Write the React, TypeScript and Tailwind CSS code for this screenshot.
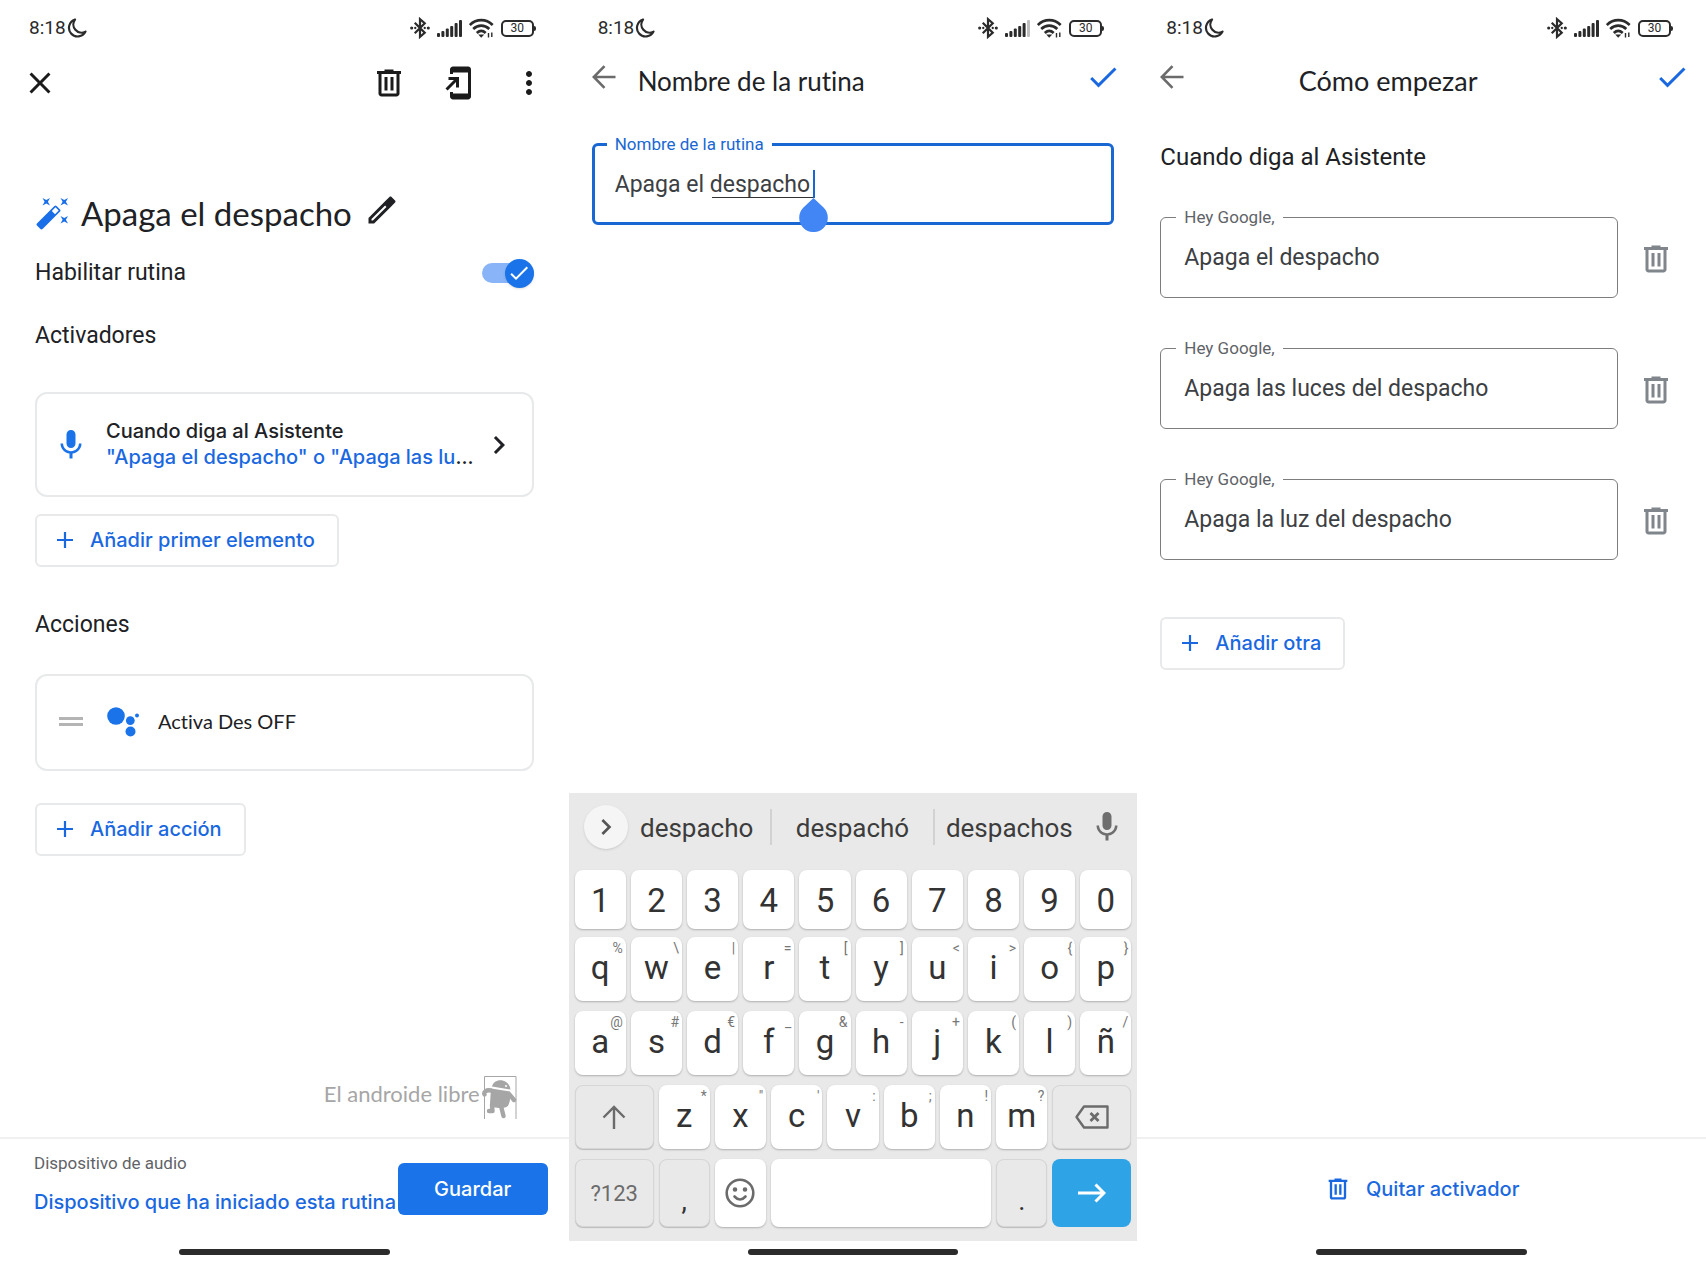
import React, { useState } from "react";

const HEAD = "font-['Lato',sans-serif] [font-variant-ligatures:none]";
const LABEL = "font-['Inter',sans-serif] font-medium text-[20px]";

const P = {
  trash: "M15 4V3H9v1H4v2h1v13c0 1.1.9 2 2 2h10c1.1 0 2-.9 2-2V6h1V4h-5zm2 15H7V6h10v13zM9 8h2v9H9zM13 8h2v9h-2z",
  home: "M18 1.01L8 1c-1.1 0-2 .9-2 2v3h2V5h10v14H8v-1H6v3c0 1.1.9 2 2 2h10c1.1 0 2-.9 2-2V3c0-1.1-.9-1.99-2-1.99zM10 15h2V8H5v2h3.59L3 15.59 4.41 17 10 11.41V15z",
  close: "M19 6.41L17.59 5 12 10.59 6.41 5 5 6.41 10.59 12 5 17.59 6.41 19 12 13.41 17.59 19 19 17.59 13.41 12z",
  dots: "M12 8c1.1 0 2-.9 2-2s-.9-2-2-2-2 .9-2 2 .9 2 2 2zm0 2c-1.1 0-2 .9-2 2s.9 2 2 2 2-.9 2-2-.9-2-2-2zm0 6c-1.1 0-2 .9-2 2s.9 2 2 2 2-.9 2-2-.9-2-2-2z",
  wand: "M7.5 5.6L10 7 8.6 4.5 10 2 7.5 3.4 5 2l1.4 2.5L5 7zm12 9.8L17 14l1.4 2.5L17 19l2.5-1.4L22 19l-1.4-2.5L22 14zM22 2l-2.5 1.4L17 2l1.4 2.5L17 7l2.5-1.4L22 7l-1.4-2.5zm-7.63 5.29a.996.996 0 00-1.41 0L1.29 18.96a.996.996 0 000 1.41l2.34 2.34c.39.39 1.02.39 1.41 0L16.7 11.05c.39-.39.39-1.02 0-1.41l-2.33-2.35zm-1.03 5.49l-2.12-2.12 2.44-2.44 2.12 2.12-2.44 2.44z",
  pencil: "M14.06 9.02l.92.92L5.92 19H5v-.92l9.06-9.06M17.66 3c-.25 0-.51.1-.7.29l-2.9 2.9L3 17.25V21h3.75L17.81 9.94l2.9-2.9c.39-.39.39-1.02 0-1.41l-2.34-2.34c-.2-.2-.45-.29-.71-.29z",
  mic: "M12 14c1.66 0 2.99-1.34 2.99-3L15 5c0-1.66-1.34-3-3-3S9 3.34 9 5v6c0 1.66 1.34 3 3 3zm5.3-3c0 3-2.54 5.1-5.3 5.1S6.7 14 6.7 11H5c0 3.41 2.72 6.23 6 6.72V21h2v-3.28c3.28-.48 6-3.3 6-6.72h-1.7z",
  chevron: "M10 6L8.59 7.41 13.17 12l-4.58 4.59L10 18l6-6z",
  check: "M9 16.17L4.83 12l-1.42 1.41L9 19 21 7l-1.41-1.41z",
};

function Icon({ d, className = "size-9" }: { d: string; className?: string }) {
  return (
    <svg viewBox="0 0 24 24" fill="currentColor" aria-hidden="true" className={`shrink-0 ${className}`}>
      <path d={d} fillRule="evenodd" />
    </svg>
  );
}

function BackArrow() {
  return (
    <svg viewBox="0 0 24 24" fill="none" stroke="currentColor" strokeWidth="2.6" aria-hidden="true" className="size-6">
      <path d="M23.5 12H2M12.5 1.2 1.8 12l10.700 10.800" />
    </svg>
  );
}

function StatusBar({ weak = false }: { weak?: boolean }) {
  return (
    <div className="flex h-14 shrink-0 items-center pl-[29px] pr-[33px] text-[#2b2b2b]">
      <span className="text-[19px] leading-6">8:18</span>
      <svg viewBox="0 0 20 20" className="ml-px size-5" fill="none" stroke="currentColor" strokeWidth="2.2" strokeLinejoin="round" aria-hidden="true">
        <path d="M8 1.500A8.700 8.700 0 1 0 18.500 13.600 A8.200 8.200 0 0 1 8 1.500z" />
      </svg>
      <div className="ml-auto flex items-center gap-[7px]">
        <svg viewBox="0 0 19 20" className="h-[22px] w-[20px]" fill="none" stroke="currentColor" strokeWidth="2.1" aria-hidden="true">
          <path d="M4.500 5 14 14.500 9.500 18.400V1.600L14 5.500 4.500 15" />
          <circle cx="1.6" cy="10" r="1.5" fill="currentColor" stroke="none" />
          <circle cx="5" cy="10" r="1.1" fill="currentColor" stroke="none" />
          <circle cx="14" cy="10" r="1.1" fill="currentColor" stroke="none" />
          <circle cx="17.4" cy="10" r="1.5" fill="currentColor" stroke="none" />
        </svg>
        <svg viewBox="0 0 25 17" className="h-[17px] w-[25px]" fill="currentColor" aria-hidden="true">
          <rect x="0" y="13" width="3" height="4" rx="1" />
          <rect x="4.4" y="11" width="3" height="6" rx="1" />
          <rect x="8.8" y="8.5" width="3" height="8.5" rx="1" />
          <rect x="13.2" y="6" width="3" height="11" rx="1" />
          <rect x="17.6" y="3" width="3" height="14" rx="1" />
          <rect x="22" y="0" width="3" height="17" rx="1" opacity={weak ? 0.3 : 1} />
        </svg>
        <svg viewBox="0 0 25 20" className="h-5 w-[25px]" fill="none" stroke="currentColor" strokeWidth="2.7" aria-hidden="true">
          <path d="M.8 7C7.500.6 17 .6 23.700 7M4.200 11c4.800-4.400 11.300-4.400 16.100 0M7.800 15c2.800-2.600 6.100-2.600 8.900 0" />
          <path d="M9.200 16.500h6L12.200 19.800z" fill="currentColor" stroke="none" />
          <path d="M19.500 19.500V15M22.800 14.500V19" strokeWidth="1.4" />
        </svg>
        <div className="flex items-center">
          <span className="flex h-[17px] w-[33px] items-center justify-center rounded-[5px] border-2 border-current text-[12px] leading-none">30</span>
          <span className="h-[5px] w-[2px] rounded-r bg-current" />
        </div>
      </div>
    </div>
  );
}

function HomeBar() {
  return <div className="mx-auto h-[6px] w-[37%] shrink-0 rounded-full bg-[#2b2b2b]" />;
}

function AddButton({ children, className = "" }: { children: string; className?: string }) {
  return (
    <button
      type="button"
      className={`flex h-[53px] items-center gap-[17px] self-start rounded-md border-2 border-[#e8e9ea] bg-white pl-5 pr-[22px] pb-[2px] text-[#1a68e0] ${LABEL} ${className}`}
    >
      <svg viewBox="0 0 16 16" className="size-4" stroke="currentColor" strokeWidth="2.2" aria-hidden="true">
        <path d="M8 0v16M0 8h16" />
      </svg>
      {children}
    </button>
  );
}

function RoutinePanel() {
  const [enabled, setEnabled] = useState(true);
  return (
    <section className="flex min-w-0 flex-col">
      <StatusBar />
      <header className="flex h-[53px] items-center px-[22px] text-[#1b1b1b]">
        <button type="button" aria-label="Cerrar"><Icon d={P.close} /></button>
        <div className="ml-auto flex items-center gap-[34px]">
          <button type="button" aria-label="Eliminar"><Icon d={P.trash} /></button>
          <button type="button" aria-label="Añadir a la pantalla de inicio"><Icon d={P.home} /></button>
          <button type="button" aria-label="Más opciones"><Icon d={P.dots} /></button>
        </div>
      </header>

      <div className="flex flex-col px-[35px] text-[#202124]">
        <div className="mt-[84px] flex h-10 items-center">
          <span className="text-[#1a6fe8]"><Icon d={P.wand} /></span>
          <h1 className={`ml-[10px] text-[33px] leading-10 ${HEAD}`}>Apaga el despacho</h1>
          <button type="button" aria-label="Editar nombre" className="mb-[6px] ml-3"><Icon d={P.pencil} /></button>
        </div>

        <label className="mt-6 flex h-8 items-center justify-between">
          <span className="text-[23px] leading-8">Habilitar rutina</span>
          <input type="checkbox" role="switch" checked={enabled} onChange={(e) => setEnabled(e.target.checked)} className="peer sr-only" />
          <span className="flex h-5 w-[52px] items-center justify-start rounded-full bg-gray-300 peer-checked:justify-end peer-checked:bg-[#8ab4f8]">
            <span className="flex size-[29px] shrink-0 items-center justify-center rounded-full bg-[#1a73e8] text-white shadow">
              <Icon d={P.check} className="size-6" />
            </span>
          </span>
        </label>

        <h2 className="mt-[31px] text-[23px] leading-8">Activadores</h2>
        <button type="button" className={`mt-[40px] flex h-[105px] items-center rounded-xl border-2 border-[#e8e9ea] pl-[16px] pr-[15px] text-left leading-[26px] ${LABEL}`}>
          <span className="text-[#1a73e8]"><Icon d={P.mic} /></span>
          <span className="ml-[17px] min-w-0 flex-1 pb-[2px]">
            <span className="block">Cuando diga al Asistente</span>
            <span className="block whitespace-nowrap text-[#1a68e0]">"Apaga el despacho" o "Apaga las lu<span className="text-[#202124]">...</span></span>
          </span>
          <Icon d={P.chevron} />
        </button>
        <AddButton className="mt-[17px]">Añadir primer elemento</AddButton>

        <h2 className="mt-[42px] text-[23px] leading-8">Acciones</h2>
        <div className="mt-[33px] flex h-[97px] items-center rounded-xl border-2 border-[#e8e9ea] pl-[22px] pb-[2px]">
          <span className="h-[9px] w-6 border-y-[3px] border-[#b4b4b4]" />
          <svg viewBox="0 0 32 32" className="ml-6 size-8" fill="#1a73e8" aria-hidden="true">
            <circle cx="9" cy="10" r="8.8" />
            <circle cx="23.3" cy="14.6" r="4.4" />
            <circle cx="23.5" cy="25.5" r="5" />
            <circle cx="30" cy="9.5" r="2" />
          </svg>
          <span className={`ml-[19px] pb-[2px] text-[20px] ${HEAD}`}>Activa Des OFF</span>
        </div>
        <AddButton className="mt-[32px]">Añadir acción</AddButton>
      </div>

      <div className="mt-auto mb-[18px] mr-[52px] flex items-center justify-end gap-px text-[#a6a6a6]">
        <span className={`pb-[6px] text-[22px] leading-8 ${HEAD}`}>El androide libre</span>
        <svg viewBox="0 0 36 44" className="h-11 w-9" fill="currentColor" aria-hidden="true">
          <path d="M3.500 44V1.500H35V44" fill="none" stroke="currentColor" strokeWidth="1" />
          <path d="M11 11.500C13 2.500 28 3 29.500 14.500z" />
          <path d="M10 13.500 29 16.500Q30 24 27.500 30 26 33.500 18 33 9 32.500 9 28z" />
          <path d="M10 15.500C5 14.500 2.500 17 3.500 19.500M28 19l5 6M11 30l.5 6H8M20 31l2.500 10" fill="none" stroke="currentColor" strokeWidth="4.400" strokeLinecap="round" strokeLinejoin="round" />
          <circle cx="25" cy="11" r="1" fill="#fff" />
        </svg>
      </div>

      <footer className="flex h-[126px] flex-col border-t-2 border-[#f0f0f0] pb-2">
        <div className="flex flex-1 items-start pl-[34px] pr-[21px]">
          <div className="min-w-0 flex-1 whitespace-nowrap pt-[12px]">
            <div className="text-[17px] leading-6 text-[#5f6368]">Dispositivo de audio</div>
            <a href="#dispositivo" className={`mt-[15px] block leading-6 text-[#1a68e0] ${LABEL}`}>Dispositivo que ha iniciado esta rutina</a>
          </div>
          <button type="button" className={`mt-6 h-[52px] w-[150px] shrink-0 rounded-md bg-[#1a73e8] text-white ${LABEL}`}>Guardar</button>
        </div>
        <HomeBar />
      </footer>
    </section>
  );
}

const DIGITS: [string, string][] = [..."1234567890"].map((c) => [c, ""]);
const ROW2: [string, string][] = [["q", "%"], ["w", "\\"], ["e", "|"], ["r", "="], ["t", "["], ["y", "]"], ["u", "<"], ["i", ">"], ["o", "{"], ["p", "}"]];
const ROW3: [string, string][] = [["a", "@"], ["s", "#"], ["d", "€"], ["f", "_"], ["g", "&"], ["h", "-"], ["j", "+"], ["k", "("], ["l", ")"], ["ñ", "/"]];
const ROW4: [string, string][] = [["z", "*"], ["x", "\""], ["c", "'"], ["v", ":"], ["b", ";"], ["n", "!"], ["m", "?"]];

const KEY = "relative flex items-center justify-center rounded-lg";
const WHITE = "bg-white shadow-[0_1px_2px_rgba(0,0,0,0.25)]";
const GREY = "bg-[#e9e9e9] border border-[#d6d6d6] shadow-[0_1px_1px_rgba(0,0,0,0.2)]";

function Key({ k }: { k: [string, string] }) {
  return (
    <button type="button" className={`${KEY} ${WHITE} min-w-0 flex-1 text-[33px] leading-none text-[#333] ${k[1] ? "pb-1" : "pt-[2px]"}`}>
      {k[0]}
      {k[1] && <span className="absolute right-[3px] top-[3px] text-[14px] leading-4 text-[#777]">{k[1]}</span>}
    </button>
  );
}

function Keyboard() {
  return (
    <div className="bg-[#e9e9e9] px-[6px] pb-[14px]">
      <div className="flex h-[77px] items-center pb-[10px] text-[26px] text-[#3c3c3c]">
        <button type="button" aria-label="Expandir" className="ml-[9px] flex size-11 shrink-0 items-center justify-center rounded-full bg-[#f5f5f5] text-[#555] shadow">
          <Icon d={P.chevron} className="size-8" />
        </button>
        <button type="button" className="w-[142px] pt-1 pr-1">despacho</button>
        <span className="h-9 w-[2px] bg-[#d2d2d2]" />
        <button type="button" className="flex-1 pt-1">despachó</button>
        <span className="h-9 w-[2px] bg-[#d2d2d2]" />
        <button type="button" className="w-[148px] pt-1">despachos</button>
        <button type="button" aria-label="Voz" className="flex w-12 justify-center text-[#6e6e6e]">
          <Icon d={P.mic} />
        </button>
      </div>
      <div className="flex h-[59px] gap-[5px]">{DIGITS.map((k) => <Key key={k[0]} k={k} />)}</div>
      <div className="mt-2 flex h-16 gap-[5px]">{ROW2.map((k) => <Key key={k[0]} k={k} />)}</div>
      <div className="mt-[10px] flex h-16 gap-[5px]">{ROW3.map((k) => <Key key={k[0]} k={k} />)}</div>
      <div className="mt-[10px] flex h-16 gap-[5px]">
        <button type="button" aria-label="Mayúsculas" className={`${KEY} ${GREY} w-[79px] shrink-0 text-[#6b6b6b]`}>
          <svg viewBox="0 0 24 24" className="size-6" fill="none" stroke="currentColor" strokeWidth="2.4" aria-hidden="true"><path d="M12 24V2M1.500 12.500 12 2l10.500 10.500" /></svg>
        </button>
        {ROW4.map((k) => <Key key={k[0]} k={k} />)}
        <button type="button" aria-label="Borrar" className={`${KEY} ${GREY} w-[79px] shrink-0 text-[#6b6b6b]`}>
          <svg viewBox="0 0 34 24" className="h-6 w-[34px]" fill="none" stroke="currentColor" strokeWidth="2.400" strokeLinejoin="round" aria-hidden="true">
            <path d="M9 1.500H32.500V22.500H9L1.500 12z" /><path d="m15.500 8 8 8m0-8-8 8" strokeWidth="2.800" />
          </svg>
        </button>
      </div>
      <div className="mt-[10px] flex h-[68px] gap-[5px]">
        <button type="button" className={`${KEY} ${GREY} w-[79px] shrink-0 text-[22px] text-[#6b6b6b]`}>?123</button>
        <button type="button" className={`${KEY} ${GREY} w-[51px] shrink-0 pt-4 text-[27px] text-[#333]`}>,</button>
        <button type="button" aria-label="Emojis" className={`${KEY} ${WHITE} w-[51px] shrink-0 text-[#6b6b6b]`}>
          <svg viewBox="0 0 30 30" className="size-[30px]" fill="none" stroke="currentColor" strokeWidth="2.600" strokeLinecap="round" aria-hidden="true">
            <circle cx="15" cy="15" r="13.300" /><path d="M9.500 18.500q5.500 6 11 0" /><circle cx="10" cy="11.500" r="1" fill="currentColor" /><circle cx="20" cy="11.500" r="1" fill="currentColor" />
          </svg>
        </button>
        <button type="button" aria-label="Espacio" className={`${KEY} ${WHITE} flex-1`} />
        <button type="button" className={`${KEY} ${GREY} w-[51px] shrink-0 pt-4 text-[27px] text-[#333]`}>.</button>
        <button type="button" aria-label="Intro" className={`${KEY} w-[79px] shrink-0 bg-[#2ea4e6] text-white`}>
          <svg viewBox="0 0 28 20" className="h-5 w-7" fill="none" stroke="currentColor" strokeWidth="3" aria-hidden="true"><path d="M0 10h26M17.500 1.500 26 10l-8.500 8.500" /></svg>
        </button>
      </div>
    </div>
  );
}

function NamePanel() {
  const [name, setName] = useState("Apaga el despacho");
  return (
    <section className="flex min-w-0 flex-col">
      <StatusBar weak />
      <header className="flex h-[53px] items-center pl-[23px] pr-4">
        <button type="button" aria-label="Atrás" className="mb-3 text-[#6b6b6b]"><BackArrow /></button>
        <h1 className={`mb-1 ml-[22px] text-[26px] leading-8 text-[#202124] ${HEAD}`}>Nombre de la rutina</h1>
        <button type="button" aria-label="Aceptar" className="mb-3 ml-auto text-[#1a68e0]"><Icon d={P.check} /></button>
      </header>
      <div className="relative mx-[23px] mt-[23px]">
        <fieldset className="h-[93px] rounded-md border-[3px] border-[#1967d2] pl-3">
          <legend className="px-2 text-[17px] leading-6 text-[#1967d2]"><label htmlFor="nombre">Nombre de la rutina</label></legend>
          <input id="nombre" value={name} onChange={(e) => setName(e.target.value)} className="block h-14 w-full bg-transparent px-2 text-[23px] text-[#3c4043] outline-none" />
        </fieldset>
        <span className="absolute left-[120px] top-[65px] h-px w-[101px] bg-[#333]" />
        <span className="absolute left-[221px] top-[38px] h-7 w-[2px] bg-[#1967d2]" />
        <svg viewBox="0 0 29 34" className="absolute left-[207px] top-[66px] h-[34px] w-[29px]" fill="#4285f4" aria-hidden="true">
          <path d="M14.500 0 24.800 9.800A14.300 14.300 0 1 1 4.200 9.800z" />
        </svg>
      </div>
      <div className="mt-auto"><Keyboard /></div>
      <div className="flex h-[22px] items-start pt-2"><HomeBar /></div>
    </section>
  );
}

function StarterPanel() {
  const [phrases, setPhrases] = useState(["Apaga el despacho", "Apaga las luces del despacho", "Apaga la luz del despacho"]);
  return (
    <section className="flex min-w-0 flex-col">
      <StatusBar />
      <header className="flex h-[53px] items-center pl-[23px] pr-4">
        <button type="button" aria-label="Atrás" className="mb-3 text-[#6b6b6b]"><BackArrow /></button>
        <h1 className={`mb-1 flex-1 pr-[62px] text-center text-[27px] leading-8 text-[#202124] ${HEAD}`}>Cómo empezar</h1>
        <button type="button" aria-label="Aceptar" className="mb-3 text-[#1a68e0]"><Icon d={P.check} /></button>
      </header>
      <div className="flex flex-col pl-[23px] pr-8">
        <h2 className="mt-8 text-[24px] leading-8 text-[#202124]">Cuando diga al Asistente</h2>
        <div className="mt-[32px] flex flex-col gap-[38px]">
          {phrases.map((p, i) => (
            <div key={i} className="flex items-center">
              <fieldset className="h-[93px] min-w-0 flex-1 rounded-md border border-[#7d7d7d] pl-[15px]">
                <legend className="px-2 text-[17px] leading-6 text-[#5f6368]"><label htmlFor={`frase-${i}`}>Hey Google,</label></legend>
                <input id={`frase-${i}`} value={p} onChange={(e) => setPhrases(phrases.map((q, j) => (j === i ? e.target.value : q)))} className="block h-14 w-full bg-transparent px-2 text-[23px] text-[#3c4043] outline-none" />
              </fieldset>
              <button type="button" aria-label={`Eliminar ${p}`} className="ml-5 mt-[14px] text-[#80868b]"><Icon d={P.trash} /></button>
            </div>
          ))}
        </div>
        <AddButton className="mt-[57px]">Añadir otra</AddButton>
      </div>
      <footer className="mt-auto flex h-[126px] flex-col border-t-2 border-[#f0f0f0] pb-2">
        <button type="button" className={`mx-auto mt-[36px] mb-auto flex items-center gap-[14px] leading-7 text-[#1a68e0] ${LABEL}`}>
          <Icon d={P.trash} className="size-7" />
          Quitar activador
        </button>
        <HomeBar />
      </footer>
    </section>
  );
}

export default function App() {
  return (
    <main className="grid min-h-screen grid-cols-3 bg-white font-['Roboto',sans-serif]">
      <RoutinePanel />
      <NamePanel />
      <StarterPanel />
    </main>
  );
}
